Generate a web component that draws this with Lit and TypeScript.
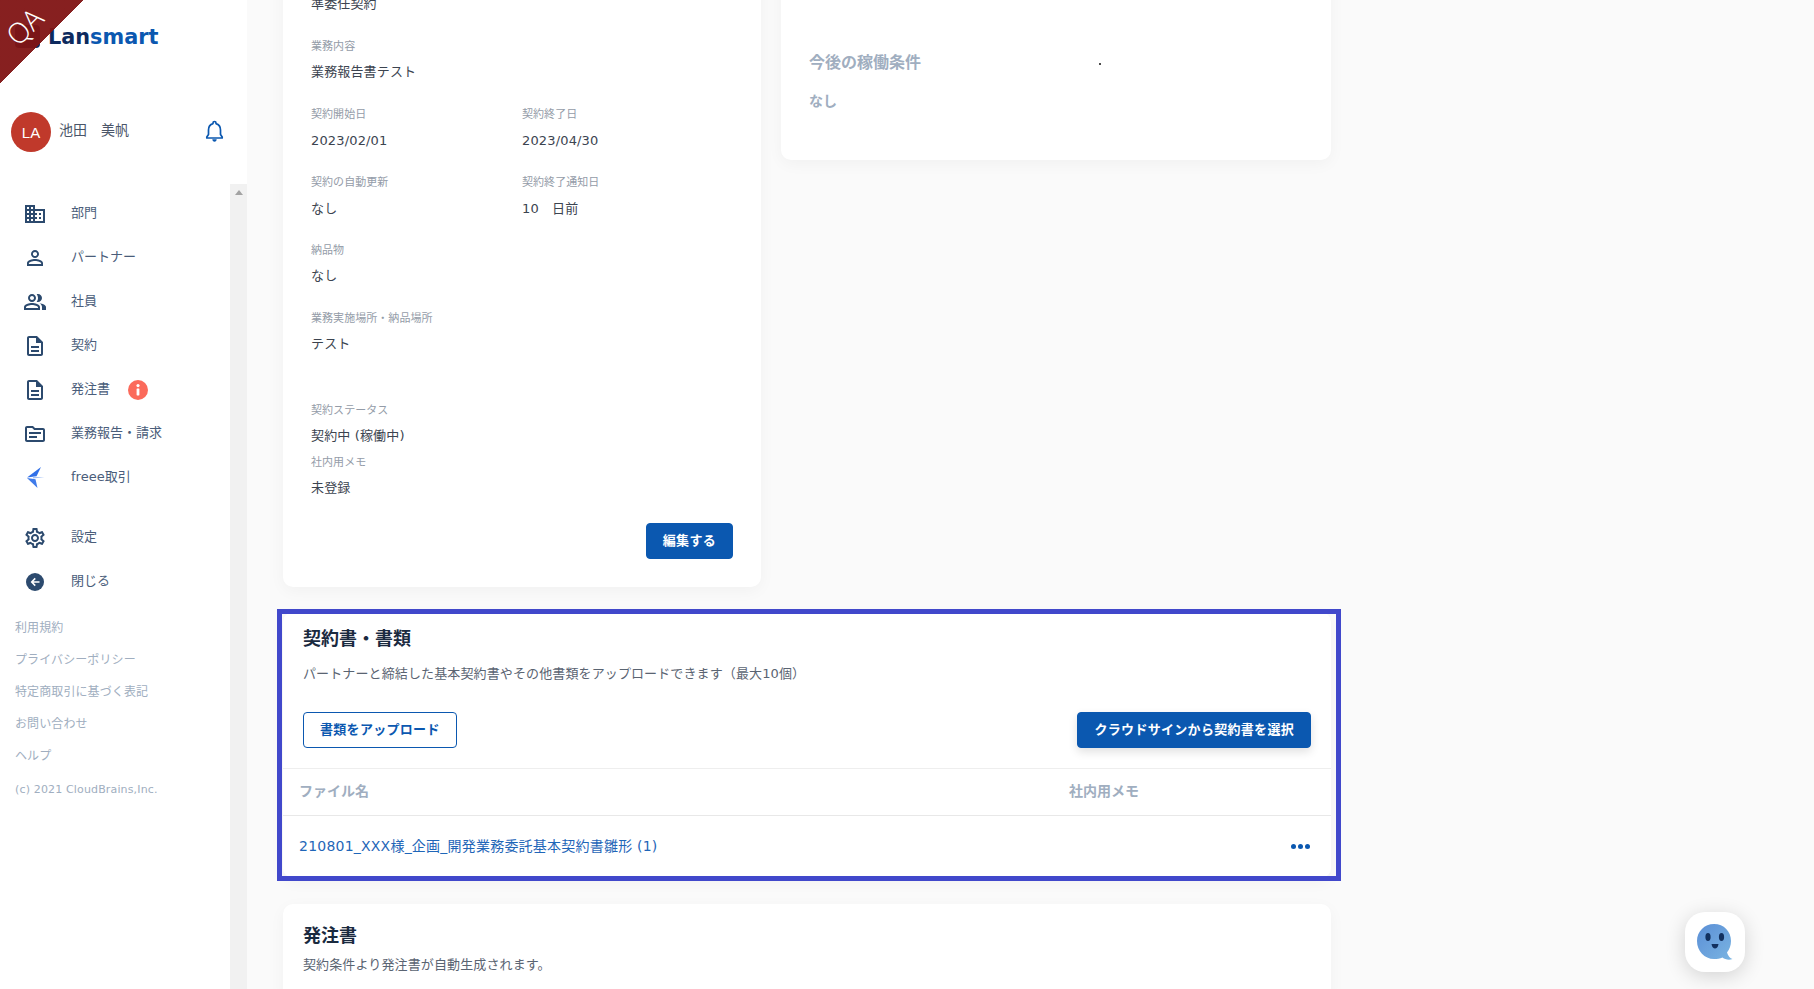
import { LitElement, html, css } from "lit";
import { customElement } from "lit/decorators.js";

const P = {
  domain: "M12 7V3H2v18h20V7H12zM6 19H4v-2h2v2zm0-4H4v-2h2v2zm0-4H4V9h2v2zm0-4H4V5h2v2zm4 12H8v-2h2v2zm0-4H8v-2h2v2zm0-4H8V9h2v2zm0-4H8V5h2v2zm10 12h-8v-2h2v-2h-2v-2h2v-2h-2V9h8v10zm-2-8h-2v2h2v-2zm0 4h-2v2h2v-2z",
  person: "M12 5.9c1.16 0 2.1.94 2.1 2.1s-.94 2.1-2.1 2.1S9.9 9.16 9.9 8s.94-2.1 2.1-2.1m0 9c2.97 0 6.1 1.46 6.1 2.1v1.1H5.9V17c0-.64 3.13-2.1 6.1-2.1M12 4C9.79 4 8 5.79 8 8s1.79 4 4 4 4-1.79 4-4-1.79-4-4-4zm0 9c-2.67 0-8 1.34-8 4v3h16v-3c0-2.66-5.33-4-8-4z",
  people: "M16.67 13.13C18.04 14.06 19 15.32 19 17v3h4v-3c0-2.18-3.57-3.47-6.33-3.87zM15 12c2.21 0 4-1.79 4-4s-1.79-4-4-4c-.47 0-.91.1-1.33.24C14.5 5.27 15 6.58 15 8s-.5 2.73-1.33 3.76c.42.14.86.24 1.33.24zM9 12c2.21 0 4-1.79 4-4s-1.79-4-4-4-4 1.79-4 4 1.79 4 4 4zm0-6c1.1 0 2 .9 2 2s-.9 2-2 2-2-.9-2-2 .9-2 2-2zM9 13c-2.67 0-8 1.34-8 4v3h16v-3c0-2.66-5.33-4-8-4zm6 5H3v-.99C3.2 16.29 6.3 15 9 15s5.8 1.29 6 2v1z",
  doc: "M8 16h8v2H8zm0-4h8v2H8zm6-10H6c-1.1 0-2 .9-2 2v16c0 1.1.89 2 1.99 2H18c1.1 0 2-.9 2-2V8l-6-6zm4 18H6V4h7v5h5v11z",
  folder: "M20 6h-8l-2-2H4c-1.1 0-2 .9-2 2v12c0 1.1.9 2 2 2h16c1.1 0 2-.9 2-2V8c0-1.1-.9-2-2-2zm0 12H4V6h5.17l2 2H20v10zM6 10h12v2H6zm0 4h8v2H6z",
  gear: "M19.43 12.98c.04-.32.07-.64.07-.98 0-.34-.03-.66-.07-.98l2.11-1.65c.19-.15.24-.42.12-.64l-2-3.46c-.09-.16-.26-.25-.44-.25-.06 0-.12.01-.17.03l-2.49 1c-.52-.4-1.08-.73-1.69-.98l-.38-2.65C14.46 2.18 14.25 2 14 2h-4c-.25 0-.46.18-.49.42l-.38 2.65c-.61.25-1.17.59-1.69.98l-2.49-1c-.06-.02-.12-.03-.18-.03-.17 0-.34.09-.43.25l-2 3.46c-.13.22-.07.49.12.64l2.11 1.65c-.04.32-.07.65-.07.98 0 .33.03.66.07.98l-2.11 1.65c-.19.15-.24.42-.12.64l2 3.46c.09.16.26.25.44.25.06 0 .12-.01.17-.03l2.49-1c.52.4 1.08.73 1.69.98l.38 2.65c.03.24.24.42.49.42h4c.25 0 .46-.18.49-.42l.38-2.65c.61-.25 1.17-.59 1.69-.98l2.49 1c.06.02.12.03.18.03.17 0 .34-.09.43-.25l2-3.46c.12-.22.07-.49-.12-.64l-2.11-1.65zm-1.98-1.71c.04.31.05.52.05.73 0 .21-.02.43-.05.73l-.14 1.13.89.7 1.08.84-.7 1.21-1.27-.51-1.04-.42-.9.68c-.43.32-.84.56-1.25.73l-1.06.43-.16 1.13-.2 1.35h-1.4l-.19-1.35-.16-1.13-1.06-.43c-.43-.18-.83-.41-1.23-.71l-.91-.7-1.06.43-1.27.51-.7-1.21 1.08-.84.89-.7-.14-1.13c-.03-.31-.05-.54-.05-.74s.02-.43.05-.73l.14-1.13-.89-.7-1.08-.84.7-1.21 1.27.51 1.04.42.9-.68c.43-.32.84-.56 1.25-.73l1.06-.43.16-1.13.2-1.35h1.39l.19 1.35.16 1.13 1.06.43c.43.18.83.41 1.23.71l.91.7 1.06-.43 1.27-.51.7 1.21-1.07.85-.89.7.14 1.13zM12 8c-2.21 0-4 1.79-4 4s1.79 4 4 4 4-1.79 4-4-1.79-4-4-4zm0 6c-1.1 0-2-.9-2-2s.9-2 2-2 2 .9 2 2-.9 2-2 2z",
};

const icon = (d: string) => html`<svg class="ico" viewBox="0 0 24 24"><path d=${d}></path></svg>`;

const closeIcon = html`<svg class="ico" viewBox="0 0 24 24">
  <circle cx="12" cy="12" r="9"></circle>
  <path d="M16.5 11.2h-6l2.3-2.3-1.1-1.1L7.6 12l4.1 4.2 1.1-1.1-2.3-2.3h6z" fill="#fff"></path>
</svg>`;

const freeeIcon = html`<svg class="ico" viewBox="0 0 24 24">
  <path d="M18 1 L4 11.500 L13.500 10.300 Z" fill="#2f6fe8"></path>
  <path d="M4 12 L14.500 22 L12.500 13.300 Z" fill="#3f7bea"></path>
  <path d="M10 10.800 L21.500 11.300 L10 12.600 Z" fill="#a9c4f5"></path>
</svg>`;

const infoBadge = html`<svg class="badge" viewBox="0 0 20 20">
  <circle cx="10" cy="10" r="10" fill="#fb6a5b"></circle>
  <circle cx="10" cy="5.600" r="1.600" fill="#fff"></circle>
  <rect x="8.600" y="8.400" width="2.800" height="7" rx=".6" fill="#fff"></rect>
</svg>`;

const navTop = [
  { t: "部門", i: icon(P.domain) },
  { t: "パートナー", i: icon(P.person) },
  { t: "社員", i: icon(P.people) },
  { t: "契約", i: icon(P.doc) },
  { t: "発注書", i: icon(P.doc), badge: true },
  { t: "業務報告・請求", i: icon(P.folder) },
  { t: "freee取引", i: freeeIcon },
];
const navBottom = [
  { t: "設定", i: icon(P.gear) },
  { t: "閉じる", i: closeIcon },
];
const links = ["利用規約", "プライバシーポリシー", "特定商取引に基づく表記", "お問い合わせ", "ヘルプ"];

const field = (label: string, value: string) => html`
  <div class="field"><div class="label">${label}</div><div class="value">${value}</div></div>`;

@customElement("app-root")
export class AppRoot extends LitElement {
  static styles = css`
    :host {
      display: flex;
      height: 989px;
      overflow: hidden;
      position: relative;
      background: #fafafa;
      font-family: "DejaVu Sans", "Noto Sans CJK JP", sans-serif;
      font-size: 13px;
      color: #3c4450;
    }
    .sidebar { width: 247px; flex: none; background: #fff; display: flex; flex-direction: column; position: relative; }
    .ribbon {
      position: absolute; left: 0; top: 0; width: 84px; height: 84px;
      background: linear-gradient(to bottom right, rgba(128, 20, 20, 0.95) 50%, transparent 50%);
    }
    .ribbon span {
      position: absolute; left: 0; top: 9px; width: 48px; text-align: center;
      transform: rotate(-45deg);
      color: #fff; font-family: "Open Sans", sans-serif; font-size: 28px; line-height: 34px; font-weight: 300;
    }
    .logo { height: 72px; display: flex; align-items: center; gap: 8px; padding-left: 15px; }
    .logo-mark { width: 25px; height: 23px; background: #0d2a5e; border-radius: 4px; margin-top: 1px; }
    .logo-text { font-family: "DejaVu Sans", sans-serif; font-weight: 700; font-size: 20.8px; color: #0d2a5e; margin-top: 2px; }
    .logo-text b { font-weight: 700; color: #0b58b0; }
    .user { display: flex; align-items: center; margin-top: 40px; padding: 0 19px 32px 11px; }
    .avatar {
      width: 40px; height: 40px; border-radius: 50%; background: #c0392b; color: #fff;
      display: flex; align-items: center; justify-content: center; font-size: 15px; font-family: "Liberation Sans", sans-serif;
      margin-right: 8px;
    }
    .name { flex: 1; font-size: 14px; line-height: 20px; padding-bottom: 4px; color: #4a5568; }
    .bell { width: 27px; height: 27px; display: block; margin-top: -2px; }
    .bell .body { fill: none; stroke: #0b58b0; stroke-width: 1.7; stroke-linejoin: round; }
    .bell .clap { fill: #0b58b0; }
    .side-body { flex: 1; display: flex; min-height: 0; }
    .nav { flex: 1; padding-top: 8px; }
    .scrollbar { width: 17px; background: #f1f1f1; display: flex; justify-content: center; padding-top: 6px; box-sizing: border-box; }
    .scrollbar i { width: 0; height: 0; border-left: 4px solid transparent; border-right: 4px solid transparent; border-bottom: 5px solid #a3a3a3; }
    .item { height: 44px; display: flex; align-items: center; padding-left: 23px; gap: 24px; color: #4a5d7a; }
    .item-label { display: flex; align-items: center; gap: 18px; }
    .item-text { line-height: 16px; padding-bottom: 3px; }
    .ico { width: 24px; height: 24px; fill: #2c4a6e; flex: none; display: block; }
    .badge { width: 20px; height: 20px; display: block; }
    .group2 { margin-top: 16px; }
    .links { margin-top: 8px; padding-left: 15px; }
    .links a { display: block; line-height: 32px; font-size: 12px; letter-spacing: 0.1px; color: #a0aec0; }
    .copy { margin-top: 10px; padding-left: 15px; font-size: 11px; letter-spacing: 0.15px; line-height: 16px; color: #a0aec0; }

    .main { flex: 1; padding-left: 36px; min-width: 0; }
    .content { width: 1048px; margin-top: -40px; }
    .top { display: grid; grid-template-columns: 478px 550px; gap: 20px; align-items: start; }
    .card { background: #fff; border-radius: 10px; box-shadow: 0 4px 16px rgba(0, 0, 0, 0.04); }
    .detail { padding: 34px 28px 28px; }
    .two { display: grid; grid-template-columns: 211px 1fr; }
    .field { padding-bottom: 24px; }
    .label { font-size: 11px; line-height: 16px; padding-top: 1px; margin-bottom: 7px; color: #949ca8; letter-spacing: 0.05px; }
    .value { font-size: 13px; line-height: 20px; color: #3c4450; letter-spacing: 0.15px; }
    .value.first { margin-bottom: 24px; }
    .two .field { padding-bottom: 23px; }
    .two .label { margin-bottom: 8px; }
    .field.wide { padding-bottom: 48px; }
    .field.tight { padding-bottom: 8px; }
    .field.last { padding-bottom: 0; }
    .actions { display: flex; justify-content: flex-end; margin-top: 25px; }
    .btn {
      height: 36px; box-sizing: border-box; border-radius: 4px; padding: 0 16px 3px;
      display: inline-flex; align-items: center; font-size: 13px; font-weight: 700; letter-spacing: 0.3px;
      background: #0b58b0; color: #fff; border: 1px solid #0b58b0; font-family: inherit;
    }
    .btn.outline { background: #fff; color: #0b58b0; }
    .btn.shadow { box-shadow: 0 4px 10px rgba(0, 0, 0, 0.12); }
    .future { position: relative; padding: 91px 28px 49px; height: 200px; box-sizing: border-box; }
    .future h3 { margin: 0 0 16px; font-size: 16px; line-height: 24px; color: #a0aec0; font-weight: 700; }
    .future p { margin: 0; font-size: 14px; line-height: 20px; color: #a0aec0; font-weight: 700; }
    .speck { position: absolute; left: 318px; top: 103px; width: 2px; height: 2px; background: #111; border-radius: 50%; }

    .docs { position: relative; margin-top: 25px; }
    .docs-head { padding: 14px 20px 20px; border-bottom: 1px solid #eeeeee; }
    h2 { margin: 0; font-size: 18px; line-height: 26px; font-weight: 700; color: #1a2a3f; }
    .desc { margin: 12px 0 0; font-size: 13px; line-height: 20px; color: #5a6472; letter-spacing: 0.12px; }
    .btn-row { display: flex; justify-content: space-between; margin-top: 28px; }
    .thead { height: 47px; box-sizing: border-box; border-bottom: 1px solid #e8e8e8; display: grid; grid-template-columns: 770px 1fr; align-items: center; padding: 0 0 2px 16px; font-size: 14px; line-height: 20px; font-weight: 700; color: #a0aec0; }
    .trow { height: 62px; box-sizing: border-box; padding: 20px 21px 0 16px; display: flex; justify-content: space-between; line-height: 20px; }
    .file { font-size: 14px; color: #1f66b8; letter-spacing: 0.22px; }
    .dots { display: flex; gap: 2px; align-items: center; height: 20px; }
    .dots i { width: 5px; height: 5px; border-radius: 50%; background: #0b58b0; }
    .highlight { position: absolute; left: -6px; right: -10px; top: -3px; bottom: -3px; border: 5px solid #4148cb; pointer-events: none; }
    .orders { margin-top: 26px; padding: 19px 20px 30px; }
    .orders .desc { margin-top: 6px; }

    .chat {
      position: absolute; left: 1685px; top: 912px; width: 60px; height: 60px; border-radius: 20px; background: #fff;
      box-shadow: 0 4px 20px rgba(0, 0, 0, 0.16); display: flex; align-items: center; justify-content: center;
    }
    .chat svg { width: 38px; height: 38px; display: block; }
  `;

  render() {
    const navItem = (n: any) => html`<div class="item">${n.i}<span class="item-label"><span class="item-text">${n.t}</span>${n.badge ? infoBadge : ""}</span></div>`;
    return html`
      <aside class="sidebar">
        <div class="logo"><div class="logo-mark"></div><div class="logo-text">Lan<b>smart</b></div></div>
        <div class="user">
          <div class="avatar">LA</div>
          <div class="name">池田　美帆</div>
          <svg class="bell" viewBox="0 0 27 27">
            <path class="body" d="M13.500 3.500 C12.600 3.500 12 4.100 12 5 V5.600 C9 6.400 7.500 9 7.500 12 V16.500 L5.800 19 V20 H21.200 V19 L19.500 16.500 V12 C19.500 9 18 6.400 15 5.600 V5 C15 4.100 14.400 3.500 13.500 3.500Z"></path>
            <path class="clap" d="M11.300 21.300 H15.700 C15.700 22.700 14.700 23.700 13.500 23.700 C12.300 23.700 11.300 22.700 11.300 21.300Z"></path>
          </svg>
        </div>
        <div class="side-body">
          <div class="nav">
            ${navTop.map(navItem)}
            <div class="group2">${navBottom.map(navItem)}</div>
            <div class="links">${links.map((l) => html`<a>${l}</a>`)}</div>
            <div class="copy">(c) 2021 CloudBrains,Inc.</div>
          </div>
          <div class="scrollbar"><i></i></div>
        </div>
        <div class="ribbon"><span>QA</span></div>
      </aside>
      <main class="main">
        <div class="content">
          <div class="top">
            <section class="card detail">
              <div class="value first">準委任契約</div>
              ${field("業務内容", "業務報告書テスト")}
              <div class="two">${field("契約開始日", "2023/02/01")}${field("契約終了日", "2023/04/30")}</div>
              <div class="two">${field("契約の自動更新", "なし")}${field("契約終了通知日", "10　日前")}</div>
              ${field("納品物", "なし")}
              <div class="field wide"><div class="label">業務実施場所・納品場所</div><div class="value">テスト</div></div>
              <div class="field tight"><div class="label">契約ステータス</div><div class="value">契約中 (稼働中)</div></div>
              <div class="field last"><div class="label">社内用メモ</div><div class="value">未登録</div></div>
              <div class="actions"><button class="btn">編集する</button></div>
            </section>
            <section class="card future">
              <h3>今後の稼働条件</h3>
              <p>なし</p>
              <div class="speck"></div>
            </section>
          </div>
          <section class="card docs">
            <div class="docs-head">
              <h2>契約書・書類</h2>
              <p class="desc">パートナーと締結した基本契約書やその他書類をアップロードできます（最大10個）</p>
              <div class="btn-row">
                <button class="btn outline">書類をアップロード</button>
                <button class="btn shadow">クラウドサインから契約書を選択</button>
              </div>
            </div>
            <div class="thead"><span>ファイル名</span><span>社内用メモ</span></div>
            <div class="trow">
              <span class="file">210801_XXX様_企画_開発業務委託基本契約書雛形 (1)</span>
              <span class="dots"><i></i><i></i><i></i></span>
            </div>
            <div class="highlight"></div>
          </section>
          <section class="card orders">
            <h2>発注書</h2>
            <p class="desc">契約条件より発注書が自動生成されます。</p>
          </section>
        </div>
      </main>
      <div class="chat">
        <svg viewBox="0 0 38 38">
          <defs><linearGradient id="g" x1="0" y1="0" x2="1" y2="1"><stop offset="0" stop-color="#5b8fd6"></stop><stop offset="1" stop-color="#7ab4e2"></stop></linearGradient></defs>
          <path d="M18 1 C28 1 35 8.500 35 18 C35 22.500 33.500 26.500 31 29.500 C32 32.500 34 35.500 36.500 36 C33 37.500 29 36.500 26.500 34.500 C24 35.500 21 36 18 36 C8.500 36 1 28 1 18 C1 8.500 8.500 1 18 1Z" fill="url(#g)"></path>
          <ellipse cx="12" cy="14" rx="2.600" ry="4" fill="#12305f"></ellipse>
          <ellipse cx="25.500" cy="14" rx="2.600" ry="4" fill="#12305f"></ellipse>
          <path d="M15.500 21 H22.500 C22 24.500 20.500 25.500 19 25.500 C17.500 25.500 16 24.500 15.500 21Z" fill="#12305f"></path>
        </svg>
      </div>
    `;
  }
}
